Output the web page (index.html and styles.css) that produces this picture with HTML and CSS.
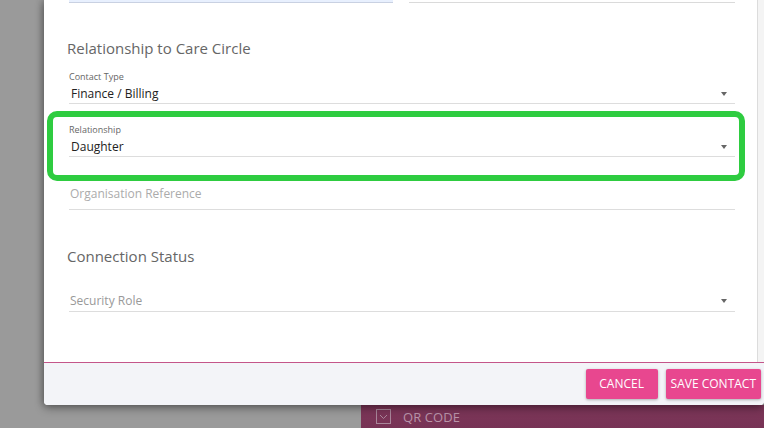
FILE: index.html
```html
<!DOCTYPE html>
<html lang="en">
<head>
<meta charset="utf-8">
<title>Contact</title>
<link rel="stylesheet" href="styles.css">
</head>
<body>
<div class="page">
  <div class="qr-bar">
    <span class="chk">
      <svg width="15" height="15" viewBox="0 0 15 15"><rect x="0.5" y="0.5" width="14" height="14" fill="none" stroke="#a9869a" stroke-width="1"/><polyline points="4,6 7.5,9.5 11,6" fill="none" stroke="#a9869a" stroke-width="1"/></svg>
    </span>
    <span class="qr-text">QR CODE</span>
  </div>

  <div class="modal">
    <div class="modal-body">
      <div class="content">
        <div class="row2">
          <div class="top-field blue"></div>
          <div class="top-field"></div>
        </div>

        <h3 class="section first">Relationship to Care Circle</h3>

        <div class="field select f-contact">
          <div class="lbl">Contact Type</div>
          <div class="val-row"><span class="val">Finance / Billing</span><span class="caret"></span></div>
        </div>

        <div class="field select f-rel highlight">
          <div class="lbl">Relationship</div>
          <div class="val-row"><span class="val">Daughter</span><span class="caret"></span></div>
        </div>

        <div class="field text-empty f-org">
          <div class="val-row"><span class="ph">Organisation Reference</span></div>
        </div>

        <h3 class="section second">Connection Status</h3>

        <div class="field select-empty f-sec">
          <div class="val-row"><span class="ph ph-dark">Security Role</span><span class="caret"></span></div>
        </div>
      </div>
      <div class="scrollbar"></div>
    </div>
    <div class="modal-footer">
      <button class="btn">CANCEL</button>
      <button class="btn">SAVE CONTACT</button>
    </div>
  </div>
</div>
</body>
</html>
```

FILE: styles.css
```css
* { box-sizing: border-box; }
html, body { margin: 0; padding: 0; }
body {
  width: 764px;
  height: 428px;
  overflow: hidden;
  background: #9a9a9a;
  font-family: "Open Sans", "DejaVu Sans", sans-serif;
}
.page {
  position: relative;
  width: 764px;
  height: 428px;
  display: flex;
  flex-direction: column;
  justify-content: flex-end;
  align-items: flex-end;
}
.qr-bar {
  width: 403px;
  height: 23px;
  background: linear-gradient(#7d3659, #773355);
  display: flex;
  align-items: center;
  padding-left: 15px;
  gap: 12px;
}
.chk { display: flex; width: 15px; height: 15px; margin-top: -1px; }
.qr-text {
  font-size: 13px;
  color: #b994aa;
  letter-spacing: 0.1px;
  line-height: 16px;
}

.modal {
  position: absolute;
  left: 44px;
  top: 0;
  width: 720px;
  height: 405px;
  background: #fff;
  border-radius: 0 0 4px 4px;
  box-shadow: 0 3px 10px rgba(0,0,0,0.38), -2px 0 6px rgba(0,0,0,0.18);
  display: flex;
  flex-direction: column;
  overflow: hidden;
}
.modal-body {
  height: 362px;
  display: flex;
  flex: none;
}
.content {
  flex: 1;
  padding: 0 22px 0 25px;
}
.scrollbar {
  width: 7px;
  background: #f4f4f4;
  border-left: 1px solid #dcdcdc;
}

.row2 {
  display: grid;
  grid-template-columns: 324px 326px;
  column-gap: 16px;
  height: 3px;
}
.top-field {
  height: 3px;
  border-bottom: 1px solid #dadada;
}
.top-field.blue {
  background: #e8f0fe;
  border-bottom-color: #c9d1e2;
}

.section {
  margin: 0 0 0 -2px;
  font-size: 15px;
  line-height: 20px;
  font-weight: 400;
  color: #666;
}
.section.first { margin-top: 35px; }
.section.second { margin-top: 36px; }

.field {
  position: relative;
  height: 33px;
  border-bottom: 1px solid #dddddd;
}
.f-contact { margin-top: 13px; }
.f-rel { margin-top: 20px; }
.f-org { margin-top: 20px; }
.f-sec { margin-top: 13px; }

.text-empty { padding-top: 9px; }
.select-empty { padding-top: 14px; }

.lbl {
  font-size: 9px;
  line-height: 12px;
  color: #666;
}
.val-row {
  display: flex;
  align-items: center;
  justify-content: space-between;
  height: 16px;
  padding-left: 2px;
  padding-right: 8px;
}
.select .val-row { margin-top: 3px; }
.text-empty .val-row, .select-empty .val-row { padding-left: 1px; }
.val {
  font-size: 12px;
  line-height: 16px;
  color: #222;
}
.ph {
  font-size: 12px;
  line-height: 16px;
  color: #ababab;
}
.ph-dark { color: #999; }
.caret {
  width: 0;
  height: 0;
  border-left: 3.5px solid transparent;
  border-right: 3.5px solid transparent;
  border-top: 4px solid #666;
}

.highlight::before {
  content: "";
  position: absolute;
  top: -13px;
  left: -22px;
  right: -10px;
  bottom: -25px;
  border: 6px solid #2ecc40;
  border-radius: 10px;
  pointer-events: none;
}

.modal-footer {
  flex: 1;
  border-top: 1px solid #c4558a;
  background: #f3f4f8;
  display: flex;
  justify-content: flex-end;
  align-items: center;
  gap: 8px;
  padding-right: 3px;
}
.btn {
  height: 30px;
  min-width: 72px;
  padding: 0 5px;
  border: none;
  border-radius: 2px;
  background: #e8478f;
  color: #fff;
  font-family: "Open Sans", "DejaVu Sans", sans-serif;
  font-size: 12px;
  line-height: 30px;
  text-align: center;
  box-shadow: 0 1px 3px rgba(0,0,0,0.3);
}
```
